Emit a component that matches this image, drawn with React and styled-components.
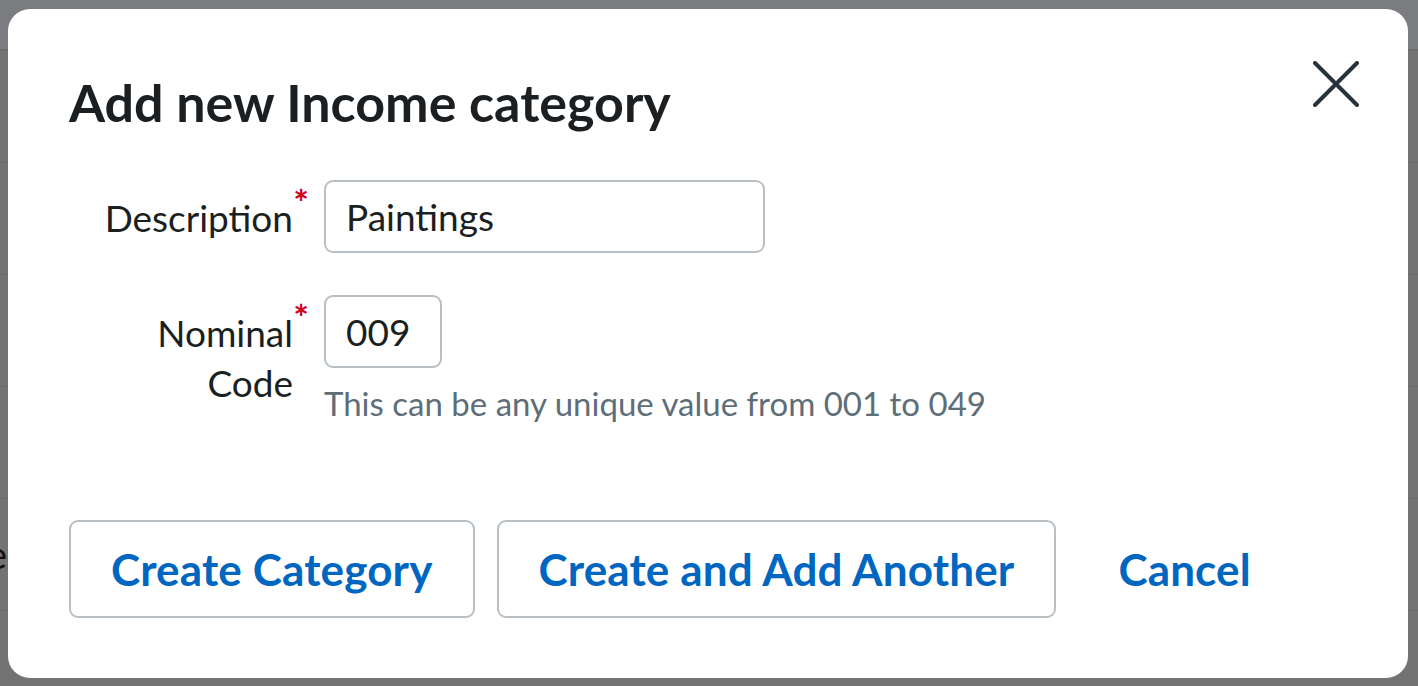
import React, { useState } from 'react';
import styled, { createGlobalStyle } from 'styled-components';

const GlobalStyle = createGlobalStyle`
    html, body {
        margin: 0;
        padding: 0;
    }
    body {
        font-family: 'Lato', 'Liberation Sans', sans-serif;
        background: #737373;
        overflow: hidden;
    }
`;

const Page = styled.div`
    width: 100vw;
    height: 100vh;
    overflow: hidden;
    display: flex;
    flex-direction: column;
    background: #737373;
`;

const PageHeader = styled.div`
    height: 51px;
    flex-shrink: 0;
    background: #7b7c80;
    border-bottom: 2px solid #6c6c6c;
    box-sizing: border-box;
`;

const PageRow = styled.div`
    height: 112px;
    flex-shrink: 0;
    display: flex;
    align-items: center;
    border-bottom: 2px solid #6c6c6c;
    box-sizing: border-box;
    color: #111;
    font-size: 38px;
`;

const RowCell = styled.span`
    margin-left: -13px;
`;

const Modal = styled.div`
    position: fixed;
    left: 8px;
    top: 9px;
    width: 1400px;
    height: 669px;
    box-sizing: border-box;
    background: #fff;
    border-radius: 22px;
    padding: 62px 61px 0 61px;
    display: flex;
    flex-direction: column;
`;

const TitleBar = styled.div`
    display: flex;
    justify-content: space-between;
    align-items: flex-start;
`;

const Title = styled.h2`
    margin: 0;
    font-size: 52px;
    line-height: 62px;
    font-weight: 700;
    color: #1b1f22;
`;

const CloseButton = styled.button`
    margin: -13px -15px 0 0;
    width: 52px;
    height: 52px;
    padding: 3px;
    border: none;
    background: none;
    cursor: pointer;
    display: flex;
    align-items: center;
    justify-content: center;
`;

const Form = styled.div`
    margin-top: 47px;
    display: flex;
    flex-direction: column;
    gap: 42px;
`;

const FieldRow = styled.div`
    display: grid;
    grid-template-columns: 224px 1fr;
    column-gap: 31px;
    align-items: start;
`;

const Label = styled.label`
    position: relative;
    text-align: right;
    font-size: 37px;
    line-height: 50px;
    color: #1b1f22;
    padding-top: ${({ offset }) => offset}px;
`;

const Required = styled.span`
    position: absolute;
    right: -16px;
    top: ${({ offset }) => offset - 6}px;
    color: #d0011b;
    font-size: 37px;
    font-weight: 700;
    line-height: 30px;
`;

const FieldBody = styled.div`
    display: flex;
    flex-direction: column;
    align-items: flex-start;
`;

const TextInput = styled.input`
    box-sizing: border-box;
    width: ${({ width }) => width}px;
    height: 73px;
    padding: 0 20px;
    border: 2px solid #b8c0c5;
    border-radius: 9px;
    font-family: inherit;
    font-size: 37px;
    color: #1b1f22;
    outline: none;
    background: #fff;
`;

const Hint = styled.div`
    margin-top: 15px;
    font-size: 33px;
    line-height: 40px;
    color: #5e6e78;
`;

const Actions = styled.div`
    margin-top: 97px;
    display: flex;
    align-items: center;
    gap: 22px;
`;

const ActionButton = styled.button`
    box-sizing: border-box;
    height: 98px;
    padding: 0 ${({ plain }) => (plain ? '38px' : '40px')};
    border: ${({ plain }) => (plain ? '2px solid transparent' : '2px solid #b8c0c5')};
    border-radius: 9px;
    background: #fff;
    color: #0066c0;
    font-family: inherit;
    font-size: 44px;
    font-weight: 700;
    letter-spacing: 0.15px;
    cursor: pointer;
`;

const CloseIcon = () => (
    <svg width="46" height="46" viewBox="0 0 46 46" fill="none">
        <path d="M2 2 L44 44 M44 2 L2 44" stroke="#27343b" strokeWidth="4" strokeLinecap="round" />
    </svg>
);

const App = () => {
    const [description, setDescription] = useState('Paintings');
    const [code, setCode] = useState('009');

    return (
        <>
            <GlobalStyle />
            <Page>
                <PageHeader />
                <PageRow />
                <PageRow />
                <PageRow />
                <PageRow />
                <PageRow>
                    <RowCell>e</RowCell>
                </PageRow>
                <PageRow />
            </Page>
            <Modal role="dialog">
                <TitleBar>
                    <Title>Add new Income category</Title>
                    <CloseButton aria-label="Close">
                        <CloseIcon />
                    </CloseButton>
                </TitleBar>
                <Form>
                    <FieldRow>
                        <Label offset={13}>
                            Description
                            <Required offset={13}>*</Required>
                        </Label>
                        <FieldBody>
                            <TextInput width={441} value={description} onChange={(e) => setDescription(e.target.value)} />
                        </FieldBody>
                    </FieldRow>
                    <FieldRow>
                        <Label offset={13}>
                            Nominal Code
                            <Required offset={13}>*</Required>
                        </Label>
                        <FieldBody>
                            <TextInput width={118} value={code} onChange={(e) => setCode(e.target.value)} />
                            <Hint>This can be any unique value from 001 to 049</Hint>
                        </FieldBody>
                    </FieldRow>
                </Form>
                <Actions>
                    <ActionButton>Create Category</ActionButton>
                    <ActionButton>Create and Add Another</ActionButton>
                    <ActionButton plain>Cancel</ActionButton>
                </Actions>
            </Modal>
        </>
    );
};

export default App;
